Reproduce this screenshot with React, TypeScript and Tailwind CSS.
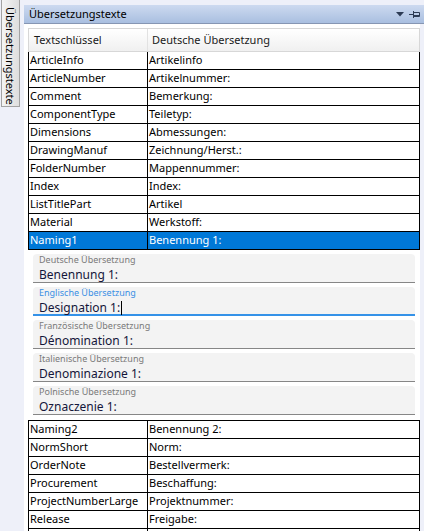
import React from "react";

const topRows = [
  ["ArticleInfo", "Artikelinfo"],
  ["ArticleNumber", "Artikelnummer:"],
  ["Comment", "Bemerkung:"],
  ["ComponentType", "Teiletyp:"],
  ["Dimensions", "Abmessungen:"],
  ["DrawingManuf", "Zeichnung/Herst.:"],
  ["FolderNumber", "Mappennummer:"],
  ["Index", "Index:"],
  ["ListTitlePart", "Artikel"],
  ["Material", "Werkstoff:"],
];

const bottomRows = [
  ["NormShort", "Norm:"],
  ["OrderNote", "Bestellvermerk:"],
  ["Procurement", "Beschaffung:"],
  ["ProjectNumberLarge", "Projektnummer:"],
  ["Release", "Freigabe:"],
  ["", ""],
];

const fields = [
  { label: "Deutsche Übersetzung", value: "Benennung 1:", focused: false },
  { label: "Englische Übersetzung", value: "Designation 1:", focused: true },
  { label: "Französische Übersetzung", value: "Dénomination 1:", focused: false },
  { label: "Italienische Übersetzung", value: "Denominazione 1:", focused: false },
  { label: "Polnische Übersetzung", value: "Oznaczenie 1:", focused: false },
];

function Row({ k, v, selected, top }: { k: string; v: string; selected?: boolean; top?: boolean }) {
  return (
    <div
      className={`flex h-[18px] shrink-0 border-x border-b border-black text-[11px] ${top ? "h-[19px] border-t" : ""} ${
        selected ? "bg-[#0078d7] text-white" : "bg-white text-black"
      }`}
    >
      <div className="flex w-[119px] items-center border-r border-black pl-[1px]">{k}</div>
      <div className="flex flex-1 items-center pl-[1px]">{v}</div>
    </div>
  );
}

function Field({ label, value, focused }: { label: string; value: string; focused: boolean }) {
  return (
    <div
      className={`h-[29px] shrink-0 rounded-t-[4px] bg-[#f3f3f3] pl-[6px] ${
        focused ? "border-b-2 border-[#3592e8]" : "border-b border-[#868686]"
      }`}
    >
      <div className={`text-[9px] leading-[12px] ${focused ? "text-[#3a8fe4]" : "text-[#7a7a7a]"}`}>{label}</div>
      <div className="mt-[1px] flex items-center text-[12px] leading-[16px] text-[#14163a]">
        {value}
        {focused && <span className="ml-[1px] inline-block h-[14px] w-px bg-black" />}
      </div>
    </div>
  );
}

export default function App() {
  return (
    <div
      className="flex h-[531px] w-[424px] overflow-hidden bg-[#eef0f9]"
      style={{ fontFamily: '"Noto Sans", "Open Sans", sans-serif' }}
    >
      <div className="w-[24px] shrink-0 pl-[1px]">
        <div className="flex h-[107px] w-[19px] items-start justify-center border border-t-0 border-[#a3a3a3] bg-gradient-to-r from-[#f4f4f4] to-[#dedede] pt-[7px]">
          <span className="text-[11px] leading-[17px] text-black [writing-mode:vertical-rl]">Übersetzungstexte</span>
        </div>
      </div>

      <div className="flex min-w-0 flex-1 flex-col pt-[5px]">
        <div className="flex h-[19px] shrink-0 items-center border-b border-[#8696b3] bg-gradient-to-b from-[#cddaf0] to-[#a9bfe0] pl-[5px] pr-[4px]">
          <span className="flex-1 text-[11px] text-black">Übersetzungstexte</span>
          <svg width="8" height="5" viewBox="0 0 8 5" className="mr-[5px]">
            <path d="M0 0h8L4 4.5z" fill="#2c3b55" />
          </svg>
          <svg width="11" height="9" viewBox="0 0 11 9">
            <path d="M0 4.5h4M4.5 1v7M4.5 2.5h6v4h-6M4.5 5.5h6" stroke="#2c3b55" strokeWidth="1" fill="none" />
          </svg>
        </div>

        <div className="mr-[4px] flex min-h-0 flex-1 flex-col bg-white pl-[4px] pt-[4px]">
          <div className="flex h-[24px] shrink-0 border border-[#d7d7d7] bg-gradient-to-b from-white to-[#f0f0f0] text-[11px] text-[#1a1a1a]">
            <div className="flex w-[119px] items-center border-r border-[#e2e2e2] pl-[5px]">Textschlüssel</div>
            <div className="flex flex-1 items-center pl-[4px]">Deutsche Übersetzung</div>
          </div>

          {topRows.map(([k, v]) => (
            <Row key={k} k={k} v={v} />
          ))}
          <Row k="Naming1" v="Benennung 1:" selected />

          <div className="flex h-[170px] shrink-0 flex-col gap-[4px] px-[5px] pt-[4px]">
            {fields.map((f) => (
              <Field key={f.label} {...f} />
            ))}
          </div>

          <Row k="Naming2" v="Benennung 2:" top />
          {bottomRows.map(([k, v], i) => (
            <Row key={i} k={k} v={v} />
          ))}
        </div>
      </div>
    </div>
  );
}
